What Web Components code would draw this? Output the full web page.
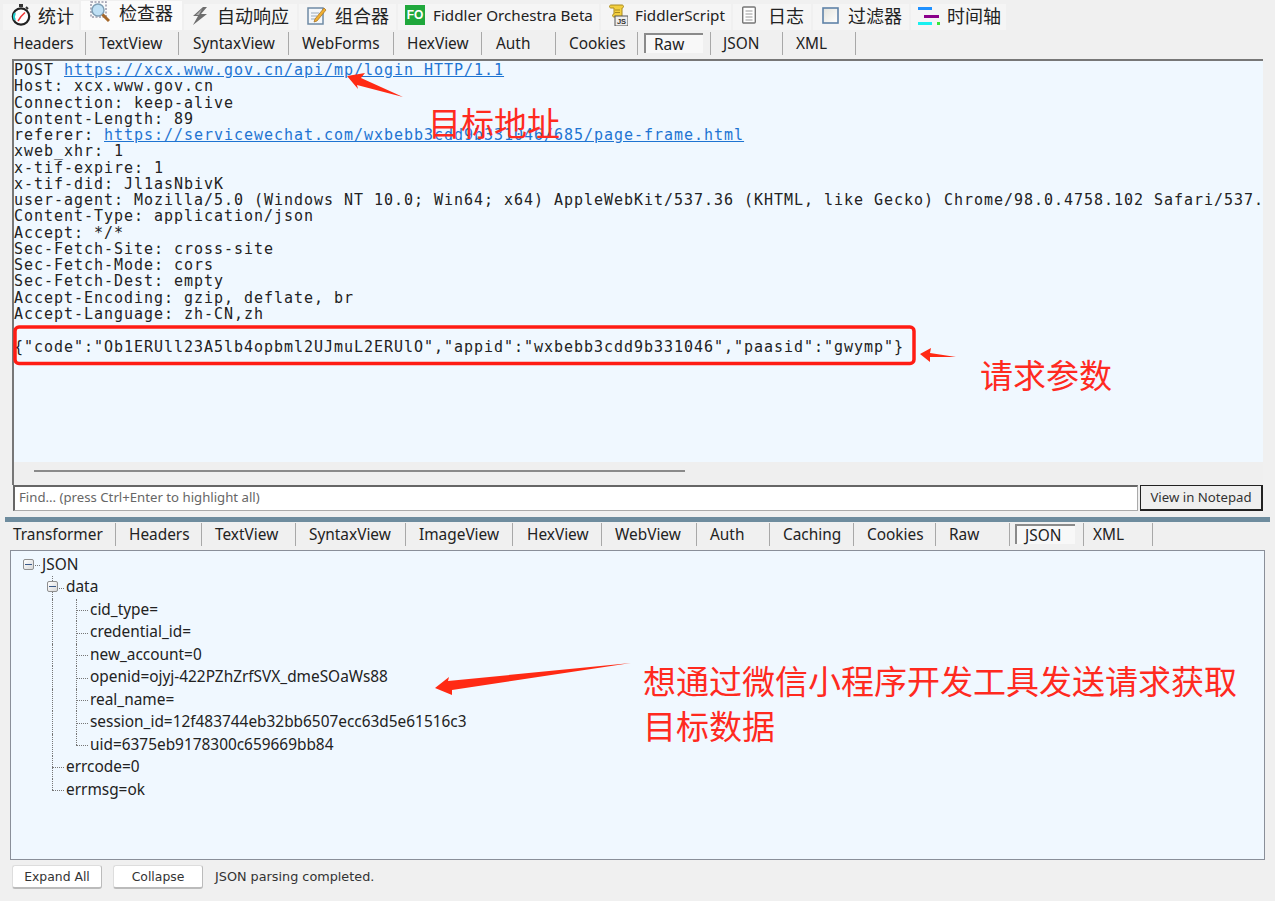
<!DOCTYPE html>
<html lang="zh">
<head>
<meta charset="utf-8">
<title>Fiddler</title>
<style>
    html, body { margin: 0; padding: 0; background: #f0f0f0; overflow: hidden; }
    body { font-family: "Noto Sans", "Noto Sans CJK SC", sans-serif; color: #222; }
</style>
</head>
<body>
<fd-app>
    <fd-main-tabs>
        <fd-main-tab w="76" pad="8" gap="7">
            <svg slot="icon" width="20" height="22" viewBox="0 0 20 22"><rect x="8" y="0" width="4" height="3" fill="#333"/><path d="M15 3l2 2" stroke="#333" stroke-width="2"/><circle cx="10" cy="12.500" r="8.200" fill="#fff" stroke="#222" stroke-width="2.200"/><path d="M4 9a7 7 0 0 0 0 7" stroke="#2cc" stroke-width="2" fill="none"/><path d="M10 12.500l4-4M10 12.500L7 17" stroke="#e33" stroke-width="1.500"/></svg>
            统计
        </fd-main-tab>
        <fd-main-tab w="101" pad="9" gap="9" active>
            <svg slot="icon" width="20" height="22" viewBox="0 0 20 22"><rect x="1" y="1" width="15" height="15" fill="none" stroke="#99a" stroke-width="1.500" stroke-dasharray="2 1.500"/><circle cx="8" cy="9" r="6" fill="#bfe0f5" stroke="#7f9fb5" stroke-width="1.500"/><path d="M12.500 13.500L19 20" stroke="#a5682a" stroke-width="3"/></svg>
            检查器
        </fd-main-tab>
        <fd-main-tab w="113" pad="8" gap="9">
            <svg slot="icon" width="16" height="22" viewBox="0 0 16 22"><path d="M11 3L1 12h5l-5 9 14-11H9l6-7z" fill="#6e6e6e"/><path d="M10 5L4 11h3" fill="#b0b0b0"/></svg>
            自动响应
        </fd-main-tab>
        <fd-main-tab w="97" pad="8" gap="8">
            <svg slot="icon" width="20" height="22" viewBox="0 0 20 22"><rect x="1" y="4" width="15" height="16" fill="#f4f7fa" stroke="#6f8ba5" stroke-width="1.500"/><path d="M4 9h8M4 12h6M4 15h5" stroke="#9ab" stroke-width="1"/><path d="M8 15l9-11 2 2-9 11-3 1z" fill="#f0b030" stroke="#a06a20" stroke-width=".7"/></svg>
            组合器
        </fd-main-tab>
        <fd-main-tab w="201" pad="7" gap="8" small>
            <fd-fo-badge slot="icon">FO</fd-fo-badge>
            Fiddler Orchestra Beta
        </fd-main-tab>
        <fd-main-tab w="130" pad="7" gap="7" small>
            <svg slot="icon" width="20" height="22" viewBox="0 0 20 22"><path d="M3 1h11c2 0 2 3 0 3v9H6c-2 0-2-3 0-3V4H3C1 4 1 1 3 1z" fill="#f3cf3e" stroke="#a98a1f"/><path d="M7 6h5M7 8.500h5" stroke="#a98a1f"/><rect x="7" y="12" width="13" height="10" fill="#eee" stroke="#555"/><text x="13.500" y="20" font-size="7.500" font-weight="700" font-family="Liberation Sans" text-anchor="middle" fill="#333">JS</text></svg>
            FiddlerScript
        </fd-main-tab>
        <fd-main-tab w="78" pad="9" gap="12">
            <svg slot="icon" width="14" height="22" viewBox="0 0 14 22"><rect x=".7" y="3" width="12.600" height="16" rx="1" fill="#fff" stroke="#777" stroke-width="1.400"/><path d="M3.500 7h7M3.500 10h7M3.500 13h7M3.500 16h7" stroke="#999"/></svg>
            日志
        </fd-main-tab>
        <fd-main-tab w="96" pad="9" gap="9">
            <svg slot="icon" width="17" height="22" viewBox="0 0 17 22"><defs><linearGradient id="fb" x1="0" y1="0" x2="1" y2="1"><stop offset="0" stop-color="#e3e3dc"/><stop offset="1" stop-color="#fff"/></linearGradient></defs><rect x="1" y="4" width="15" height="15" fill="url(#fb)" stroke="#5f83a8" stroke-width="1.600"/></svg>
            过滤器
        </fd-main-tab>
        <fd-main-tab w="95" pad="7" gap="7">
            <svg slot="icon" width="22" height="22" viewBox="0 0 22 22"><rect x="0" y="3" width="14" height="3" fill="#1e90ff"/><rect x="6" y="11" width="15" height="3" fill="#8b008b"/><rect x="0" y="18" width="14" height="3" fill="#19f0f0"/><rect x="19" y="18" width="3" height="3" fill="#39e639"/></svg>
            时间轴
        </fd-main-tab>
    </fd-main-tabs>

    <fd-tabs top="2" bottom="4">
        <fd-tab w="73">Headers</fd-tab>
        <fd-tab w="93" pad="13">TextView</fd-tab>
        <fd-tab w="110" pad="14">SyntaxView</fd-tab>
        <fd-tab w="105" pad="13">WebForms</fd-tab>
        <fd-tab w="88" pad="13">HexView</fd-tab>
        <fd-tab w="74" pad="14">Auth</fd-tab>
        <fd-tab w="82" pad="13">Cookies</fd-tab>
        <fd-tab w="73" pad="6" box="59" active>Raw</fd-tab>
        <fd-tab w="72" pad="12">JSON</fd-tab>
        <fd-tab w="73" pad="13">XML</fd-tab>
    </fd-tabs>

    <fd-raw-view>
        <fd-raw-line>POST <a>https://xcx.www.gov.cn/api/mp/login HTTP/1.1</a></fd-raw-line>
        <fd-raw-line>Host: xcx.www.gov.cn</fd-raw-line>
        <fd-raw-line>Connection: keep-alive</fd-raw-line>
        <fd-raw-line>Content-Length: 89</fd-raw-line>
        <fd-raw-line>referer: <a>https://servicewechat.com/wxbebb3cdd9b331046/685/page-frame.html</a></fd-raw-line>
        <fd-raw-line>xweb_xhr: 1</fd-raw-line>
        <fd-raw-line>x-tif-expire: 1</fd-raw-line>
        <fd-raw-line>x-tif-did: Jl1asNbivK</fd-raw-line>
        <fd-raw-line>user-agent: Mozilla/5.0 (Windows NT 10.0; Win64; x64) AppleWebKit/537.36 (KHTML, like Gecko) Chrome/98.0.4758.102 Safari/537.36</fd-raw-line>
        <fd-raw-line>Content-Type: application/json</fd-raw-line>
        <fd-raw-line>Accept: */*</fd-raw-line>
        <fd-raw-line>Sec-Fetch-Site: cross-site</fd-raw-line>
        <fd-raw-line>Sec-Fetch-Mode: cors</fd-raw-line>
        <fd-raw-line>Sec-Fetch-Dest: empty</fd-raw-line>
        <fd-raw-line>Accept-Encoding: gzip, deflate, br</fd-raw-line>
        <fd-raw-line>Accept-Language: zh-CN,zh</fd-raw-line>
        <fd-raw-line>&nbsp;</fd-raw-line>
        <fd-raw-line>{"code":"Ob1ERUll23A5lb4opbml2UJmuL2ERUlO","appid":"wxbebb3cdd9b331046","paasid":"gwymp"}</fd-raw-line>
    </fd-raw-view>

    <fd-find-bar></fd-find-bar>
    <fd-splitter></fd-splitter>

    <fd-tabs top="1" bottom="4">
        <fd-tab w="103">Transformer</fd-tab>
        <fd-tab w="86" pad="13">Headers</fd-tab>
        <fd-tab w="94" pad="13">TextView</fd-tab>
        <fd-tab w="110" pad="13">SyntaxView</fd-tab>
        <fd-tab w="107" pad="13">ImageView</fd-tab>
        <fd-tab w="89" pad="14">HexView</fd-tab>
        <fd-tab w="95" pad="13">WebView</fd-tab>
        <fd-tab w="73" pad="13">Auth</fd-tab>
        <fd-tab w="84" pad="13">Caching</fd-tab>
        <fd-tab w="82" pad="13">Cookies</fd-tab>
        <fd-tab w="74" pad="13">Raw</fd-tab>
        <fd-tab w="74" pad="5" box="60" active>JSON</fd-tab>
        <fd-tab w="69" pad="9">XML</fd-tab>
    </fd-tabs>

    <fd-tree-view></fd-tree-view>

    <fd-bottom-bar>JSON parsing completed.</fd-bottom-bar>

    <fd-annotations>
        <span slot="addr">目标地址</span>
        <span slot="params">请求参数</span>
        <span slot="goal">想通过微信小程序开发工具发送请求获取<br>目标数据</span>
    </fd-annotations>
</fd-app>

<script>
class FdApp extends HTMLElement {
    constructor() {
        super()
        this.attachShadow({ mode: 'open' })
        this.shadowRoot.innerHTML = `
            <style>
                :host {
                    display: flex;
                    flex-direction: column;
                    position: relative;
                    width: 1275px;
                    height: 901px;
                    overflow: hidden;
                    background: #f0f0f0;
                    font-family: "Noto Sans", "Noto Sans CJK SC", sans-serif;
                    color: #222;
                }
            </style>
            <slot></slot>
        `
    }
}

class FdMainTabs extends HTMLElement {
    constructor() {
        super()
        this.attachShadow({ mode: 'open' })
        this.shadowRoot.innerHTML = `
            <style>
                :host {
                    display: flex;
                    align-items: flex-end;
                    gap: 2px;
                    height: 30px;
                    padding-left: 3px;
                    box-sizing: border-box;
                }
            </style>
            <slot></slot>
        `
    }
}

class FdMainTab extends HTMLElement {
    constructor() {
        super()
        this.attachShadow({ mode: 'open' })
        this.shadowRoot.innerHTML = `
            <style>
                :host {
                    display: flex;
                    align-items: flex-start;
                    box-sizing: border-box;
                    height: 26px;
                    background: #f5f5f5;
                    font-family: "Noto Sans CJK SC", "Noto Sans", sans-serif;
                    font-size: 18px;
                    color: #222;
                    white-space: nowrap;
                }
                :host([active]) {
                    height: 29px;
                    background: #fbfbfb;
                }
                :host([small]) {
                    font-family: "Noto Sans", sans-serif;
                    font-size: 15.200px;
                }
                .inner {
                    display: flex;
                    align-items: center;
                    height: 22px;
                }
                .icon { display: flex; align-items: center; }
            </style>
            <div class="inner" id="inner">
                <span class="icon" id="icon"><slot name="icon"></slot></span>
                <slot></slot>
            </div>
        `
    }
    connectedCallback() {
        this.style.width = this.getAttribute('w') + 'px'
        const inner = this.shadowRoot.getElementById('inner')
        inner.style.paddingLeft = this.getAttribute('pad') + 'px'
        this.shadowRoot.getElementById('icon').style.marginRight = this.getAttribute('gap') + 'px'
    }
}

class FdFoBadge extends HTMLElement {
    constructor() {
        super()
        this.attachShadow({ mode: 'open' })
        this.shadowRoot.innerHTML = `
            <style>
                :host {
                    display: flex;
                    align-items: center;
                    justify-content: center;
                    width: 20px;
                    height: 20px;
                    background: #20a83c;
                    color: #fff;
                    font: 700 12px "Liberation Sans", sans-serif;
                }
            </style>
            <slot></slot>
        `
    }
}

class FdTabs extends HTMLElement {
    constructor() {
        super()
        this.attachShadow({ mode: 'open' })
        this.shadowRoot.innerHTML = `
            <style>
                :host {
                    display: flex;
                    padding-left: 13px;
                    font-size: 15.400px;
                    color: #222;
                }
            </style>
            <slot></slot>
        `
    }
    connectedCallback() {
        this.style.paddingTop = this.getAttribute('top') + 'px'
        this.style.paddingBottom = this.getAttribute('bottom') + 'px'
    }
}

class FdTab extends HTMLElement {
    constructor() {
        super()
        this.attachShadow({ mode: 'open' })
        this.shadowRoot.innerHTML = `
            <style>
                :host {
                    display: flex;
                    align-items: center;
                    box-sizing: border-box;
                    height: 23px;
                    border-right: 1px solid #a8a8a8;
                    white-space: nowrap;
                }
                .box {
                    display: flex;
                    align-items: center;
                }
                :host([active]) .box {
                    box-sizing: border-box;
                    height: 20px;
                    padding-left: 8px;
                    margin-top: -1px;
                    background: #f8f8f8;
                    border-top: 2px solid #8a8a8a;
                    border-left: 2px solid #8a8a8a;
                }
            </style>
            <div class="box" id="box"><slot></slot></div>
        `
    }
    connectedCallback() {
        this.style.width = this.getAttribute('w') + 'px'
        const pad = this.getAttribute('pad')
        if (pad) this.style.paddingLeft = pad + 'px'
        const box = this.getAttribute('box')
        if (box) this.shadowRoot.getElementById('box').style.width = box + 'px'
    }
}

class FdRawView extends HTMLElement {
    constructor() {
        super()
        this.attachShadow({ mode: 'open' })
        this.shadowRoot.innerHTML = `
            <style>
                :host {
                    display: flex;
                    flex-direction: column;
                    box-sizing: border-box;
                    width: 1251px;
                    height: 426px;
                    margin-left: 12px;
                    border-top: 2px solid #777;
                    border-left: 2px solid #777;
                }
                .text {
                    flex: 1;
                    overflow: hidden;
                    padding-top: 1px;
                    background: #f0f8ff;
                }
                .scroll {
                    display: flex;
                    align-items: center;
                    box-sizing: border-box;
                    height: 23px;
                    padding: 0 0 5px 20px;
                    background: #efefef;
                }
                .thumb {
                    width: 651px;
                    height: 2px;
                    background: #8a8a8a;
                }
            </style>
            <div class="text"><slot></slot></div>
            <div class="scroll"><div class="thumb"></div></div>
        `
    }
}

class FdRawLine extends HTMLElement {
    constructor() {
        super()
        this.attachShadow({ mode: 'open' })
        this.shadowRoot.innerHTML = `
            <style>
                :host {
                    display: block;
                    height: 16.270px;
                    line-height: 16.270px;
                    font-family: "DejaVu Sans Mono", monospace;
                    font-size: 15px;
                    letter-spacing: .97px;
                    color: #222;
                }
                slot {
                    display: block;
                    white-space: pre;
                }
                ::slotted(a) {
                    color: #1e74d2;
                    text-decoration: underline;
                }
            </style>
            <slot></slot>
        `
    }
}

class FdFindBar extends HTMLElement {
    constructor() {
        super()
        this.attachShadow({ mode: 'open' })
        this.shadowRoot.innerHTML = `
            <style>
                :host {
                    display: flex;
                    gap: 2px;
                    width: 1250px;
                    height: 26px;
                    margin-left: 13px;
                    font-family: "Noto Sans", sans-serif;
                    font-size: 13.200px;
                }
                .input {
                    flex: 1;
                    display: flex;
                    align-items: center;
                    box-sizing: border-box;
                    padding: 0 0 4px 4px;
                    background: #fff;
                    border: 1px solid #aaa;
                    border-top: 2px solid #666;
                    border-left: 2px solid #666;
                    color: #666;
                }
                .btn {
                    display: flex;
                    align-items: center;
                    justify-content: center;
                    box-sizing: border-box;
                    width: 123px;
                    padding-bottom: 2px;
                    background: #efefef;
                    border: 2px solid #222;
                    border-top-width: 1px;
                    border-left-width: 1px;
                    color: #333;
                }
            </style>
            <div class="input">Find... (press Ctrl+Enter to highlight all)</div>
            <div class="btn">View in Notepad</div>
        `
    }
}

class FdSplitter extends HTMLElement {
    constructor() {
        super()
        this.attachShadow({ mode: 'open' })
        this.shadowRoot.innerHTML = `
            <style>
                :host {
                    display: block;
                    width: 1265px;
                    height: 5px;
                    margin: 6px 0 0 5px;
                    background: #6e8c9e;
                }
            </style>
        `
    }
}

class FdTreeView extends HTMLElement {
    rows = [
        { guides: ['box'], text: 'JSON' },
        { guides: ['', 'box'], text: 'data' },
        { guides: ['', 'line', 'tee'], text: 'cid_type=' },
        { guides: ['', 'line', 'tee'], text: 'credential_id=' },
        { guides: ['', 'line', 'tee'], text: 'new_account=0' },
        { guides: ['', 'line', 'tee'], text: 'openid=ojyj-422PZhZrfSVX_dmeSOaWs88' },
        { guides: ['', 'line', 'tee'], text: 'real_name=' },
        { guides: ['', 'line', 'tee'], text: 'session_id=12f483744eb32bb6507ecc63d5e61516c3' },
        { guides: ['', 'line', 'end'], text: 'uid=6375eb9178300c659669bb84' },
        { guides: ['', 'tee'], text: 'errcode=0' },
        { guides: ['', 'end'], text: 'errmsg=ok' },
    ]
    constructor() {
        super()
        this.attachShadow({ mode: 'open' })
        this.shadowRoot.innerHTML = `
            <style>
                :host {
                    display: block;
                    box-sizing: border-box;
                    width: 1255px;
                    height: 310px;
                    margin-left: 10px;
                    padding: 3px 0 0 5px;
                    background: #f0f8ff;
                    border: 1px solid #8a8f99;
                    font-size: 15.400px;
                    color: #222;
                }
                .row {
                    display: flex;
                    height: 22.480px;
                    line-height: 22.480px;
                    white-space: nowrap;
                }
                .cell {
                    position: relative;
                    width: 24px;
                    flex: none;
                }
                .cell.line::before, .cell.tee::before, .cell.end::before, .cell.box::before {
                    content: '';
                    position: absolute;
                    left: 12px;
                    top: 0;
                    bottom: 0;
                    border-left: 1px dotted #777;
                }
                .cell.end::before { bottom: 50%; }
                .cell.tee::after, .cell.end::after, .cell.box::after {
                    content: '';
                    position: absolute;
                    left: 12px;
                    right: 0;
                    top: 50%;
                    border-top: 1px dotted #777;
                }
                .root::before { display: none; }
                .toggle {
                    position: absolute;
                    z-index: 1;
                    left: 7px;
                    top: 5px;
                    box-sizing: border-box;
                    width: 11px;
                    height: 11px;
                    background: linear-gradient(135deg, #fff, #d8d8d8);
                    border: 1px solid #8f8f8f;
                    border-radius: 2px;
                }
                .toggle::after {
                    content: '';
                    position: absolute;
                    left: 1px;
                    right: 1px;
                    top: 4px;
                    height: 1px;
                    background: #3a5a8a;
                }
                .label { padding-left: 2px; }
            </style>
            <div id="rows"></div>
        `
    }
    connectedCallback() {
        const container = this.shadowRoot.getElementById('rows')
        container.innerHTML = ''
        this.rows.forEach((row, i) => {
            const rowEl = document.createElement('div')
            rowEl.className = 'row'
            row.guides.forEach((guide) => {
                const cell = document.createElement('span')
                cell.className = 'cell ' + guide
                if (guide === 'box') {
                    const toggle = document.createElement('span')
                    toggle.className = 'toggle'
                    cell.appendChild(toggle)
                    if (i === 0) cell.classList.add('root')
                }
                rowEl.appendChild(cell)
            })
            const label = document.createElement('span')
            label.className = 'label'
            label.textContent = row.text
            rowEl.appendChild(label)
            container.appendChild(rowEl)
        })
    }
}

class FdBottomBar extends HTMLElement {
    constructor() {
        super()
        this.attachShadow({ mode: 'open' })
        this.shadowRoot.innerHTML = `
            <style>
                :host {
                    display: flex;
                    align-items: center;
                    height: 41px;
                    padding: 0 0 8px 12px;
                    box-sizing: border-box;
                    font-family: "DejaVu Sans", sans-serif;
                    font-size: 12.800px;
                    color: #333;
                }
                .btn {
                    display: flex;
                    align-items: center;
                    justify-content: center;
                    box-sizing: border-box;
                    width: 90px;
                    height: 24px;
                    margin-right: 11px;
                    background: #fff;
                    border: 1px solid #ddd;
                    border-right-color: #bbb;
                    border-bottom: 2px solid #bbb;
                    border-radius: 3px;
                    font-size: 12.400px;
                }
                .status { margin-left: 1px; }
            </style>
            <div class="btn">Expand All</div>
            <div class="btn">Collapse</div>
            <div class="status"><slot></slot></div>
        `
    }
}

class FdAnnotations extends HTMLElement {
    constructor() {
        super()
        this.attachShadow({ mode: 'open' })
        this.shadowRoot.innerHTML = `
            <style>
                :host {
                    display: block;
                    position: absolute;
                    inset: 0;
                    pointer-events: none;
                    font-family: "Noto Sans CJK SC", sans-serif;
                    font-size: 33px;
                    color: #ff2a1f;
                }
                svg { position: absolute; left: 0; top: 0; }
                .note { position: absolute; white-space: nowrap; line-height: 44.500px; }
                #addr { left: 428px; top: 100px; }
                #params { left: 980px; top: 352px; }
                #goal { left: 643px; top: 658px; }
            </style>
            <svg width="1275" height="901" viewBox="0 0 1275 901">
                <rect x="15" y="327" width="899" height="36.500" rx="4" fill="none" stroke="#ff1c14" stroke-width="3.500"/>
                <polygon points="347,76 365,73 361,78 403,97 357,85 358,89" fill="#ff2a14"/>
                <polygon points="920,354 931,348 930,353 956,357 930,357 930,362" fill="#ff2a14"/>
                <polygon points="435,688 449,677 448,681 631,663 452,690 452,695" fill="#ff2a14"/>
            </svg>
            <div class="note" id="addr"><slot name="addr"></slot></div>
            <div class="note" id="params"><slot name="params"></slot></div>
            <div class="note" id="goal"><slot name="goal"></slot></div>
        `
    }
}

customElements.define('fd-app', FdApp)
customElements.define('fd-main-tabs', FdMainTabs)
customElements.define('fd-main-tab', FdMainTab)
customElements.define('fd-fo-badge', FdFoBadge)
customElements.define('fd-tabs', FdTabs)
customElements.define('fd-tab', FdTab)
customElements.define('fd-raw-view', FdRawView)
customElements.define('fd-raw-line', FdRawLine)
customElements.define('fd-find-bar', FdFindBar)
customElements.define('fd-splitter', FdSplitter)
customElements.define('fd-tree-view', FdTreeView)
customElements.define('fd-bottom-bar', FdBottomBar)
customElements.define('fd-annotations', FdAnnotations)
</script>
</body>
</html>
